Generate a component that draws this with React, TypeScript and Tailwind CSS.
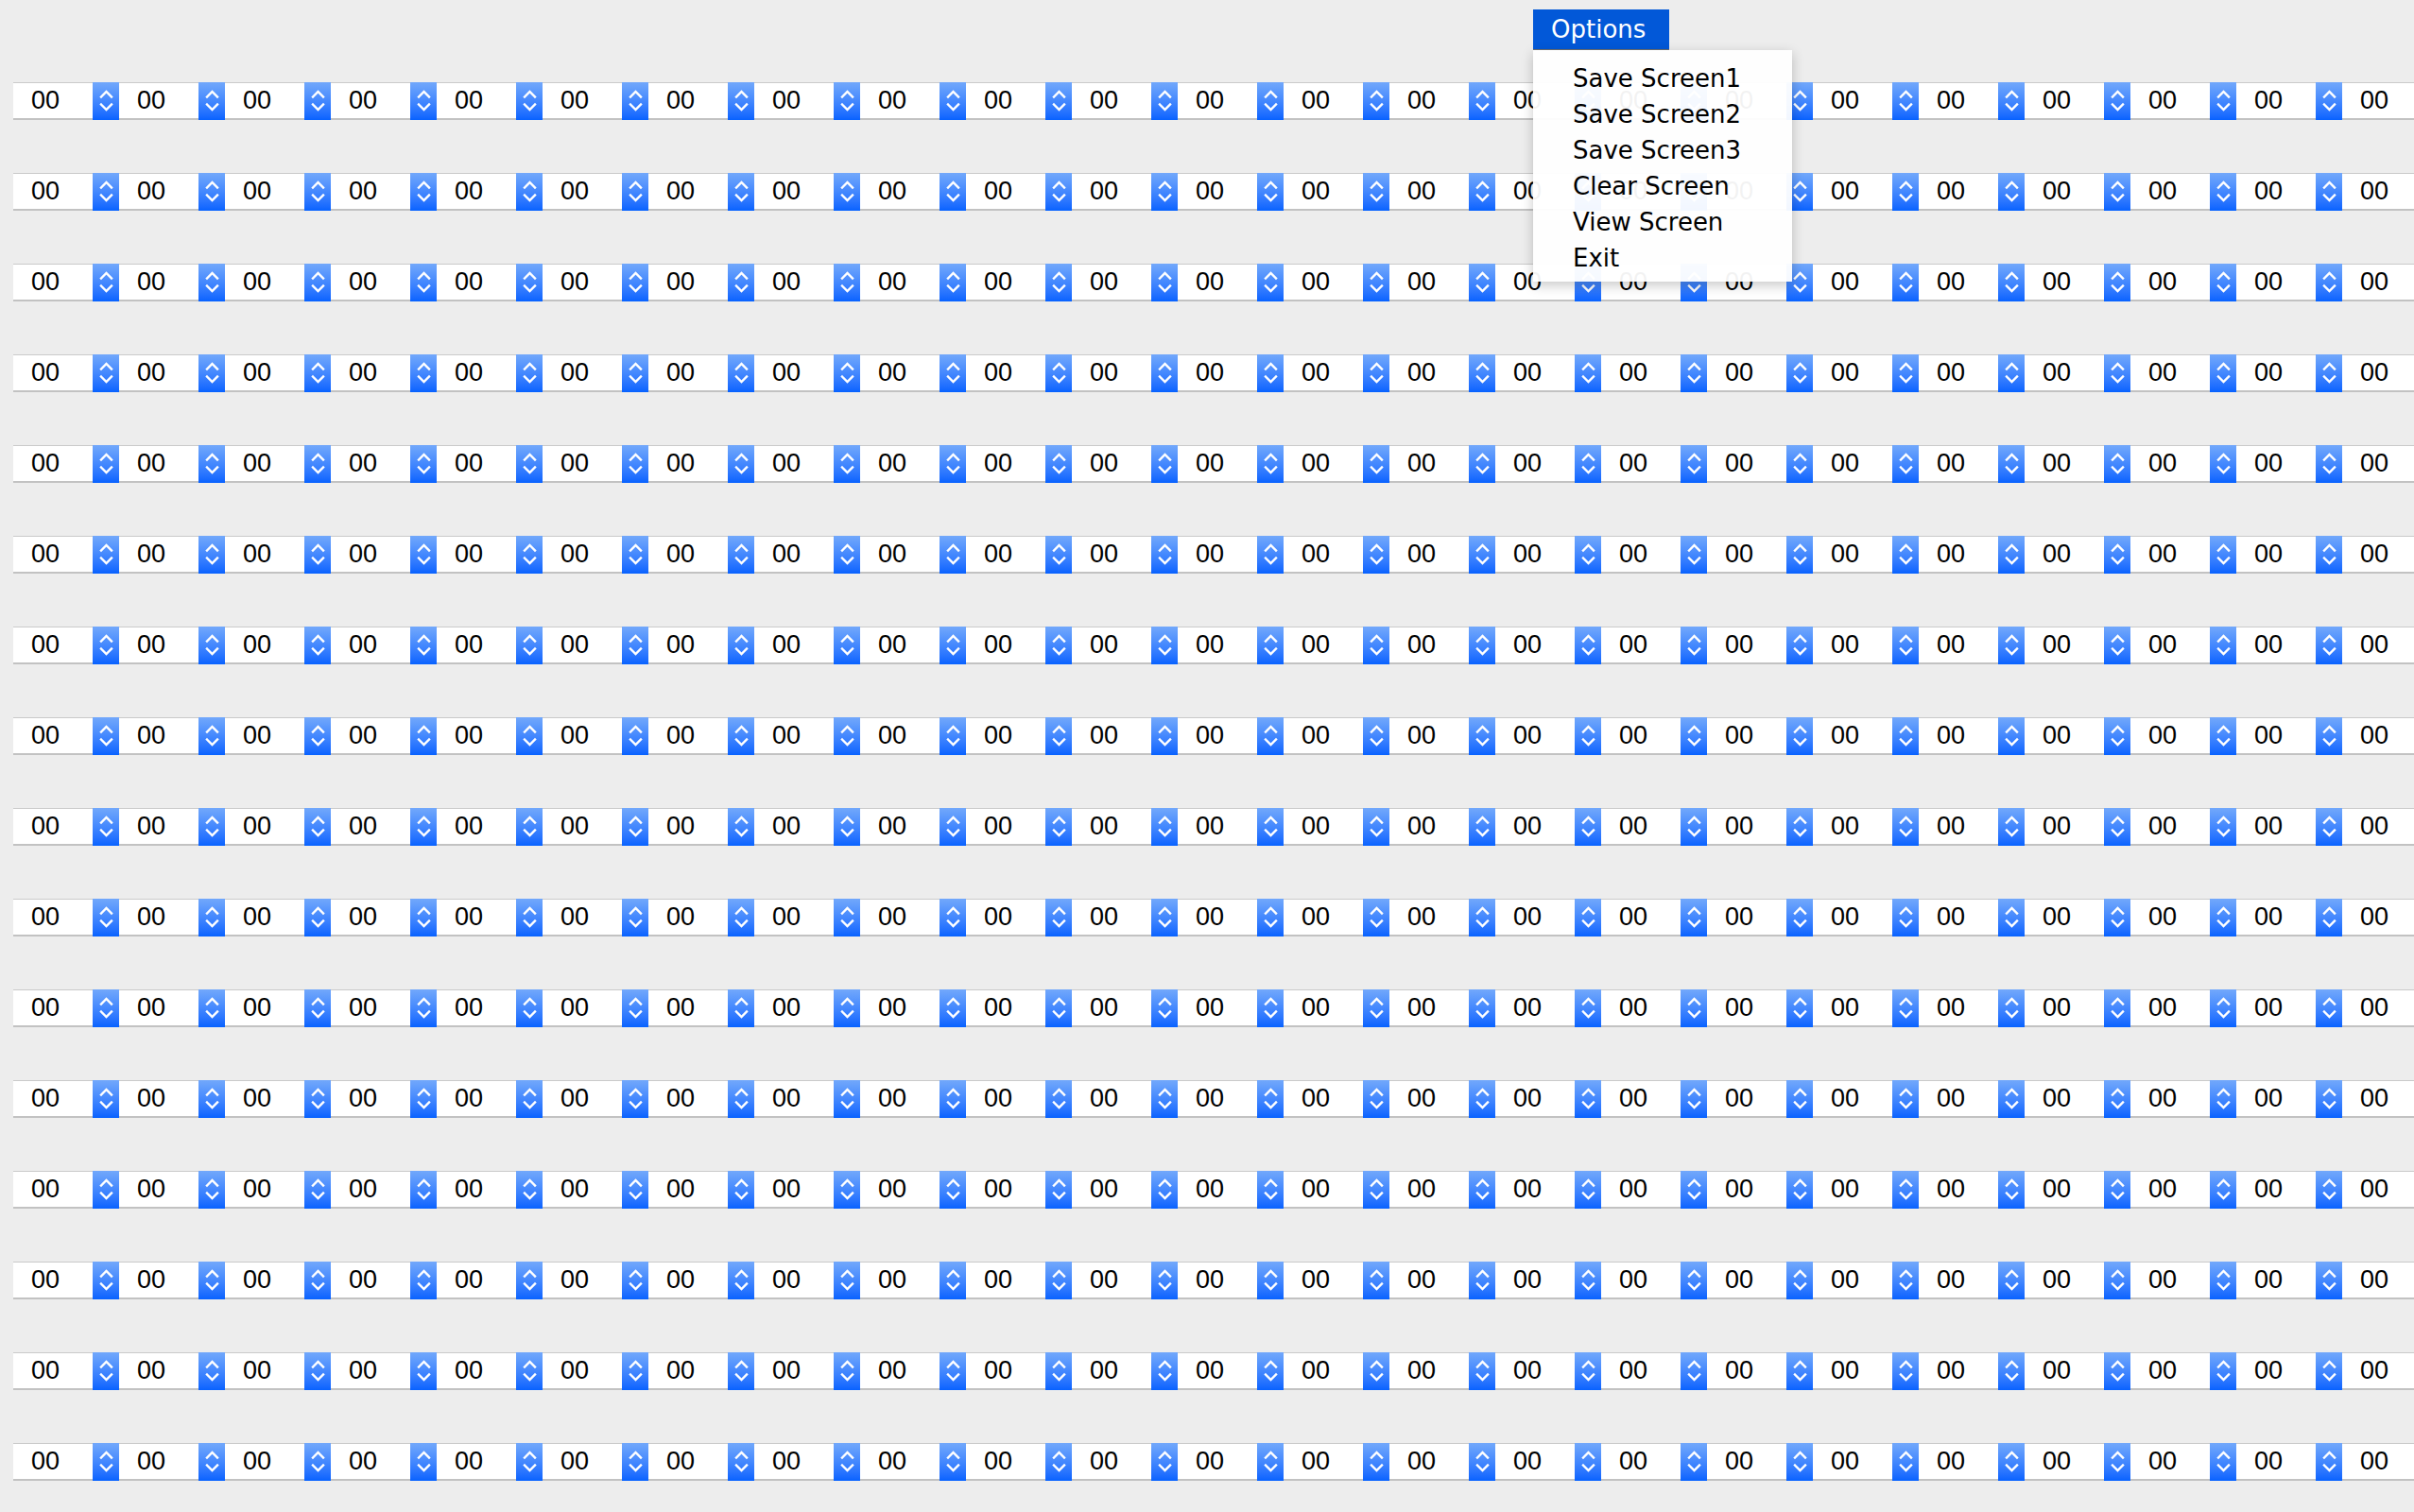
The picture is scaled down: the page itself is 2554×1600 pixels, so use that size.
import React from 'react';

const ROWS = 16;
const COLS = 23;

const MENU_ITEMS = ['Save Screen1', 'Save Screen2', 'Save Screen3', 'Clear Screen', 'View Screen', 'Exit'];

function Stepper() {
  return (
    <div className="w-[28px] h-[40px] shrink-0 bg-gradient-to-b from-[#72a8fb] to-[#0662ff] flex items-center justify-center">
      <svg width={28} height={40} viewBox="0 0 28 40" fill="none" stroke="white" strokeWidth={2.4} strokeLinecap="square">
        <path d="M9 15.5l5.5-5.5 5.5 5.5" />
        <path d="M9 23.5l5.5 5.5 5.5-5.5" />
      </svg>
    </div>
  );
}

function Cell() {
  return (
    <div className="flex shrink-0 w-[112px] h-[40px]">
      <div className="w-[84px] h-[40px] shrink-0 bg-white border-t border-t-[#cacaca] border-b-2 border-b-[#c2c2c2] flex items-center pl-[19px] text-[27px] leading-none text-black font-['Liberation_Sans',Arial,sans-serif]">
        00
      </div>
      <Stepper />
    </div>
  );
}

export default function App() {
  return (
    <div className="relative w-screen h-screen overflow-hidden bg-[#ededed]">
      <div className="flex flex-col gap-[56px] pt-[87px] pl-[14px]">
        {Array.from({ length: ROWS }).map((_, r) => (
          <div key={r} className="flex">
            {Array.from({ length: COLS }).map((_, c) => (
              <Cell key={c} />
            ))}
          </div>
        ))}
      </div>

      {/* Options menu */}
      <div className="absolute left-[1622px] top-[10px] font-['DejaVu_Sans',sans-serif]">
        <div className="w-[144px] h-[43px] bg-[#0258d8] border-b border-b-[#6e6e6e] text-white text-[26px] leading-none flex items-center pl-[19px]">
          Options
        </div>
        <div className="w-[274px] bg-white/95 shadow-[0_4px_12px_rgba(0,0,0,0.22)] pt-[11px] pb-[6px]">
          {MENU_ITEMS.map((item) => (
            <div key={item} className="pl-[42px] text-[26px] leading-[38px] text-black">
              {item}
            </div>
          ))}
        </div>
      </div>
    </div>
  );
}
